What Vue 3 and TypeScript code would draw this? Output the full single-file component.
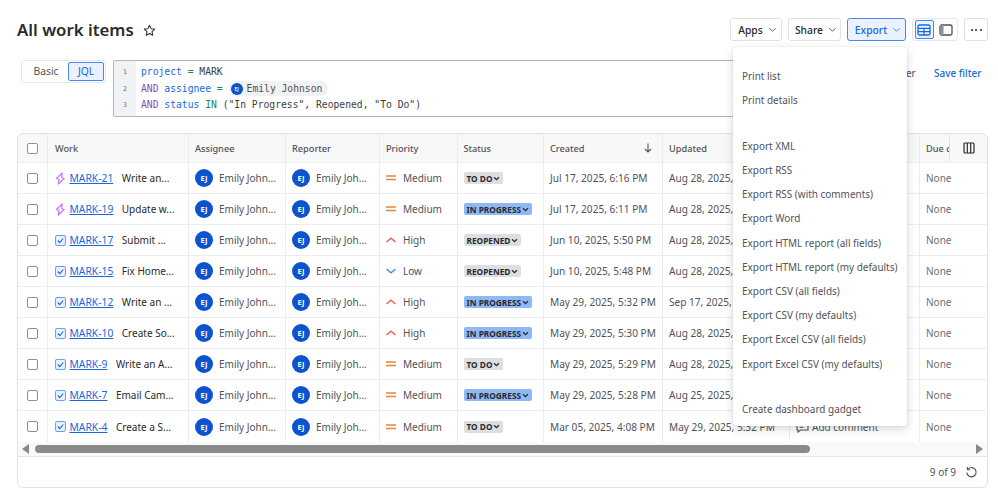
<script setup lang="ts">
type Row = { kind: 'epic' | 'task'; key: string; sum: string; pri: 'Medium' | 'High' | 'Low'; st: 'TO DO' | 'IN PROGRESS' | 'REOPENED'; created: string; updated: string }
const rows: Row[] = [
  { kind: 'epic', key: 'MARK-21', sum: 'Write an...', pri: 'Medium', st: 'TO DO', created: 'Jul 17, 2025, 6:16 PM', updated: 'Aug 28, 2025, 3:12 PM' },
  { kind: 'epic', key: 'MARK-19', sum: 'Update w...', pri: 'Medium', st: 'IN PROGRESS', created: 'Jul 17, 2025, 6:11 PM', updated: 'Aug 28, 2025, 3:12 PM' },
  { kind: 'task', key: 'MARK-17', sum: 'Submit ...', pri: 'High', st: 'REOPENED', created: 'Jun 10, 2025, 5:50 PM', updated: 'Aug 28, 2025, 3:12 PM' },
  { kind: 'task', key: 'MARK-15', sum: 'Fix Home...', pri: 'Low', st: 'REOPENED', created: 'Jun 10, 2025, 5:48 PM', updated: 'Aug 28, 2025, 3:12 PM' },
  { kind: 'task', key: 'MARK-12', sum: 'Write an ...', pri: 'High', st: 'IN PROGRESS', created: 'May 29, 2025, 5:32 PM', updated: 'Sep 17, 2025, 3:12 PM' },
  { kind: 'task', key: 'MARK-10', sum: 'Create So...', pri: 'High', st: 'IN PROGRESS', created: 'May 29, 2025, 5:30 PM', updated: 'Aug 28, 2025, 3:12 PM' },
  { kind: 'task', key: 'MARK-9', sum: 'Write an A...', pri: 'Medium', st: 'TO DO', created: 'May 29, 2025, 5:29 PM', updated: 'Aug 28, 2025, 3:12 PM' },
  { kind: 'task', key: 'MARK-7', sum: 'Email Cam...', pri: 'Medium', st: 'IN PROGRESS', created: 'May 29, 2025, 5:28 PM', updated: 'Aug 25, 2025, 3:12 PM' },
  { kind: 'task', key: 'MARK-4', sum: 'Create a S...', pri: 'Medium', st: 'TO DO', created: 'Mar 05, 2025, 4:08 PM', updated: 'May 29, 2025, 5:32 PM' },
]
const menu = [
  ['Print list', 'Print details'],
  ['Export XML', 'Export RSS', 'Export RSS (with comments)', 'Export Word', 'Export HTML report (all fields)', 'Export HTML report (my defaults)', 'Export CSV (all fields)', 'Export CSV (my defaults)', 'Export Excel CSV (all fields)', 'Export Excel CSV (my defaults)'],
  ['Create dashboard gadget'],
]
</script>

<template>
  <div class="page">
    <header class="top">
      <div class="title-wrap">
        <h1>All work items</h1>
        <svg class="star" viewBox="0 0 14 14" width="13" height="13"><path d="M7 1.400l1.700 3.600 3.900.5-2.900 2.700.8 3.900L7 10.200l-3.500 1.900.8-3.900L1.400 5.500l3.900-.5z" fill="none" stroke="#292a2e" stroke-width="1.100" stroke-linejoin="round"/></svg>
      </div>
      <div class="actions">
        <button class="btn apps">Apps<svg class="chev" viewBox="0 0 10 10"><path d="M1.500 3.500L5 7l3.500-3.500" /></svg></button>
        <button class="btn share">Share<svg class="chev" viewBox="0 0 10 10"><path d="M1.500 3.500L5 7l3.500-3.500" /></svg></button>
        <button class="btn export">Export<svg class="chev" viewBox="0 0 10 10"><path d="M1.500 3.500L5 7l3.500-3.500" /></svg></button>
        <div class="view-group">
          <span class="view on"><svg viewBox="0 0 14 12" width="14" height="12"><rect x="1" y="1" width="12" height="10" rx="1.500" fill="none" stroke="#1868db" stroke-width="1.300"/><path d="M1 4.300h12M1 7.700h12M7 4.300V11" stroke="#1868db" stroke-width="1.200" fill="none"/></svg></span>
          <span class="view"><svg viewBox="0 0 14 12" width="14" height="12"><rect x="1" y="1" width="12" height="10" rx="1.500" fill="none" stroke="#505258" stroke-width="1.300"/><rect x="1" y="1" width="3.500" height="10" fill="#8c8f97"/></svg></span>
        </div>
        <button class="btn more"><i></i><i></i><i></i></button>
      </div>
    </header>

    <section class="filter">
      <div class="toggle">
        <span class="tg">Basic</span>
        <span class="tg active">JQL</span>
      </div>
      <div class="jql">
        <div class="nums"><span>1</span><span>2</span><span>3</span></div>
        <div class="code">
          <div><b class="f">project</b> <b class="o">=</b> MARK</div>
          <div class="l2"><b class="k">AND</b> <b class="f">assignee</b> <b class="o">=</b> <span class="chip"><span class="chip-av">EJ</span>Emily Johnson</span></div>
          <div><b class="k">AND</b> <b class="f">status</b> <b class="o">IN</b> ("In Progress", Reopened, "To Do")</div>
        </div>
      </div>
      <span class="side">Filter</span>
      <a class="save">Save filter</a>
    </section>

    <section class="card">
      <div class="scroller">
        <div class="row head">
          <div class="c c0"><span class="cb"></span></div>
          <div class="c c1">Work</div>
          <div class="c c2">Assignee</div>
          <div class="c c3">Reporter</div>
          <div class="c c4">Priority</div>
          <div class="c c5">Status</div>
          <div class="c c6 created">Created<svg viewBox="0 0 10 12" width="10" height="12"><path d="M5 1.500v8.500M1.800 6.800L5 10l3.200-3.200" fill="none" stroke="#505258" stroke-width="1.100"/></svg></div>
          <div class="c c7">Updated</div>
          <div class="c c8">Comments</div>
          <div class="c c9">Due date</div>
          <div class="picker"><svg viewBox="0 0 12 12" width="12" height="12"><rect x="1" y="1" width="10" height="10" rx="1" fill="none" stroke="#292a2e" stroke-width="1.200"/><path d="M4.300 1v10M7.700 1v10" stroke="#292a2e" stroke-width="1.200"/></svg></div>
        </div>
        <div v-for="r in rows" :key="r.key" class="row body">
          <div class="c c0"><span class="cb"></span></div>
          <div class="c c1">
            <svg v-if="r.kind === 'epic'" class="ti" viewBox="0 0 12 14" width="11" height="13"><path d="M7.800 1L1.800 6.800l2.700 1.300-1 5 6.500-6-2.700-1.200z" fill="none" stroke="#c97cf4" stroke-width="1.400" stroke-linejoin="round"/></svg>
            <svg v-else class="ti" viewBox="0 0 12 12" width="11" height="11"><rect x=".6" y=".6" width="10.800" height="10.800" rx="1.800" fill="#e9f2fe" stroke="#669df1" stroke-width="1.100"/><path d="M3 6l2.200 2.300L9 3.800" fill="none" stroke="#1868db" stroke-width="1.200"/></svg>
            <a class="key">{{ r.key }}</a>
            <span class="sum">{{ r.sum }}</span>
          </div>
          <div class="c c2 person"><span class="av">EJ</span><span class="nm">Emily John...</span></div>
          <div class="c c3 person"><span class="av">EJ</span><span class="nm">Emily Joh...</span></div>
          <div class="c c4 pri">
            <svg v-if="r.pri === 'Medium'" viewBox="0 0 10 8" width="10" height="8"><path d="M0 2h10M0 5.500h10" stroke="#e2853c" stroke-width="1.500"/></svg>
            <svg v-else-if="r.pri === 'High'" viewBox="0 0 10 8" width="10" height="8"><path d="M.5 6L5 2.200 9.500 6" fill="none" stroke="#f15b50" stroke-width="1.400"/></svg>
            <svg v-else viewBox="0 0 10 8" width="10" height="8"><path d="M.5 2L5 5.800 9.500 2" fill="none" stroke="#4688ec" stroke-width="1.400"/></svg>
            {{ r.pri }}
          </div>
          <div class="c c5"><span class="loz" :class="{ prog: r.st === 'IN PROGRESS' }">{{ r.st }}<svg viewBox="0 0 8 8" width="7" height="7"><path d="M1.200 2.500L4 5.300l2.800-2.800" fill="none" stroke="#292a2e" stroke-width="1.500"/></svg></span></div>
          <div class="c c6 date">{{ r.created }}</div>
          <div class="c c7 date">{{ r.updated }}</div>
          <div class="c c8 comment"><svg viewBox="0 0 13 12" width="13" height="12"><path d="M1 1.500h11v7.500H4.500L2 11V9H1z" fill="none" stroke="#505258" stroke-width="1.100"/><path d="M3.500 4h6M3.500 6.300h4" stroke="#505258" stroke-width="1"/></svg>Add comment</div>
          <div class="c c9 none">None</div>
        </div>
      </div>
      <div class="hbar">
        <svg viewBox="0 0 8 10" width="8" height="10"><path d="M7 0v10L0 5z" fill="#8a8a8a"/></svg>
        <div class="track"><div class="thumb"></div></div>
        <svg viewBox="0 0 8 10" width="8" height="10"><path d="M1 0v10l7-5z" fill="#8a8a8a"/></svg>
      </div>
      <footer class="foot">
        <span>9 of 9</span>
        <svg viewBox="0 0 14 14" width="13" height="13"><path d="M3.300 3.300A5 5 0 1 1 2 7" fill="none" stroke="#505258" stroke-width="1.200"/><path d="M2.600 1v3h3" fill="none" stroke="#505258" stroke-width="1.200"/></svg>
      </footer>
    </section>

    <nav class="menu">
      <div v-for="(g, i) in menu" :key="i" class="group">
        <div v-for="m in g" :key="m" class="item">{{ m }}</div>
      </div>
    </nav>
  </div>
</template>

<style>
html, body { margin: 0; background: #fff; overflow: hidden; }
</style>

<style scoped>
.page {
  position: relative;
  width: 998px;
  height: 496px;
  box-sizing: border-box;
  padding: 18px 10px 0 17px;
  font-family: "Noto Sans", "Open Sans", sans-serif;
  font-size: 10px;
  color: #292a2e;
  overflow: hidden;
}
.top { display: flex; justify-content: space-between; align-items: center; height: 23px; }
.title-wrap { display: flex; align-items: center; gap: 9px; }
h1 { margin: 0; font-size: 16.800px; font-weight: 600; line-height: 23px; color: #292a2e; }
.star { display: block; margin-top: 1px; }
.actions { display: flex; align-items: center; gap: 6px; }
.btn {
  display: flex; align-items: center; justify-content: center; gap: 5px;
  box-sizing: border-box; height: 23px; padding: 0 0 0 3px;
  border: 1px solid #dfe1e4; border-radius: 3px; background: #fff;
  font: 500 10.300px "Noto Sans", sans-serif; color: #292a2e;
}
.apps { width: 52px; }
.share { width: 53px; }
.export { width: 59px; background: #e9f2fe; border-color: #4688ec; color: #1868db; }
.chev { width: 9px; height: 9px; fill: none; stroke: currentColor; stroke-width: 1; opacity: .85; }
.view-group { display: flex; gap: 3px; align-items: center; box-sizing: border-box; height: 23px; width: 46px; padding: 0 2px; border: 1px solid #e6e7e9; border-radius: 3px; }
.view { display: flex; align-items: center; justify-content: center; width: 19px; height: 19px; box-sizing: border-box; border-radius: 2px; }
.view.on { background: #e9f2fe; border: 1px solid #4688ec; }
.btn.more { width: 24px; gap: 2.500px; padding: 0; }
.more i { width: 2px; height: 2px; border-radius: 50%; background: #292a2e; }

.filter { display: flex; align-items: flex-start; margin-top: 19px; padding-left: 4px; }
.toggle { display: flex; align-items: center; box-sizing: border-box; width: 85px; height: 23px; padding: 1px 1px 1px 2px; border: 1px solid #e6e7e9; border-radius: 3px; margin-right: 7px; }
.tg { flex: 1; text-align: center; color: #505258; font-size: 10.300px; line-height: 19px; }
.tg.active { flex: 0 0 36px; box-sizing: border-box; border: 1px solid #4688ec; border-radius: 2px; background: #e9f2fe; color: #1868db; line-height: 17px; height: 19px; }
.jql { display: flex; box-sizing: border-box; width: 760px; height: 57px; border: 1.500px solid #b3b5b8; border-radius: 2px; font: 9.700px/16.500px "DejaVu Sans Mono", "Liberation Mono", monospace; color: #3b3d42; }
.nums { display: flex; flex-direction: column; width: 22px; padding-top: 3px; background: #f1f2f3; text-align: center; color: #6b6e76; font-size: 6.500px; }
.nums span { height: 16.500px; }
.code { padding: 3px 0 0 5px; white-space: pre; }
.code b { font-weight: 400; }
.f { color: #1868db; }
.o { color: #1f845a; }
.k { color: #8f49c6; }
.l2 { display: flex; align-items: center; height: 16.500px; gap: 5.850px; }
.chip { display: inline-flex; align-items: center; gap: 4px; height: 15px; padding: 0 6px 0 2px; margin-left: 0; border-radius: 8px; background: #f0f1f2; color: #505258; }
.chip-av { display: flex; align-items: center; justify-content: center; width: 12px; height: 12px; border-radius: 50%; background: #0c53cf; color: #fff; font: 700 4.500px "Noto Sans", sans-serif; }
.side { position: absolute; left: 892px; top: 66px; color: #505258; font-size: 10px; }
.save { position: absolute; left: 934px; top: 66px; color: #1868db; font-weight: 500; font-size: 10px; }

.card { display: flex; flex-direction: column; box-sizing: border-box; height: 355px; margin-top: 16px; border: 1px solid #dfe1e4; border-radius: 6px; overflow: hidden; }
.scroller { position: relative; height: 308px; overflow: hidden; }
.row { display: flex; height: 31px; box-sizing: border-box; border-bottom: 1.500px solid #ebecee; }
.row:last-child { border-bottom: 0; }
.row.head { height: 29px; background: #f8f8f8; font-weight: 500; color: #505258; font-size: 9.200px; }
.c { display: flex; flex: none; align-items: center; box-sizing: border-box; padding-left: 6px; border-right: 1.500px solid #ebecee; white-space: nowrap; overflow: hidden; }
.c0 { width: 30px; padding-left: 9px; }
.c1 { width: 141px; gap: 3.500px; padding-left: 7px; }
.c2 { width: 97px; }
.c3 { width: 94px; }
.c4 { width: 78px; }
.c5 { width: 86px; padding-left: 5.500px; }
.c6 { width: 119px; }
.c7 { width: 127px; }
.c8 { width: 130px; }
.c9 { width: 69px; border-right: 0; }
.created { justify-content: space-between; padding-right: 9px; }
.cb { display: block; width: 11px; height: 11px; box-sizing: border-box; border: 1px solid #8c8f97; border-radius: 2px; background: #fff; }
.ti { flex: none; }
.key { color: #1868db; text-decoration: underline; font-size: 10.300px; }
.sum { margin-left: 5px; color: #292a2e; }
.person { gap: 6px; color: #505258; }
.av { display: flex; flex: none; align-items: center; justify-content: center; width: 18px; height: 18px; border-radius: 50%; background: #0c53cf; color: #fff; font-size: 7.500px; font-weight: 700; }
.pri { gap: 7px; color: #505258; }
.loz { display: inline-flex; align-items: center; gap: 1px; height: 12px; padding: 0 3px; border-radius: 2px; background: #dddee1; color: #292a2e; font-size: 8.300px; font-weight: 700; }
.loz.prog { background: #8fb8f6; }
.date { color: #505258; font-size: 10.100px; }
.comment { gap: 3px; color: #505258; }
.none { color: #6b6e76; }
.picker { position: absolute; right: 0; top: 0; display: flex; align-items: center; justify-content: center; width: 37px; height: 27.500px; background: #f8f8f8; border-left: 1px solid #e3e4e6; }
.hbar { display: flex; align-items: center; justify-content: space-between; height: 15px; padding: 0 4px; box-sizing: border-box; background: #f9f9f9; border-bottom: 1px solid #e3e4e6; }
.track { flex: 1; padding: 0 165px 0 5px; }
.thumb { height: 8px; border-radius: 4px; background: #8a8a8a; }
.foot { display: flex; align-items: center; justify-content: flex-end; gap: 9px; flex: 1; padding-right: 9px; color: #505258; }

.menu { position: absolute; left: 733px; top: 47px; width: 174px; height: 379px; box-sizing: border-box; padding: 17px 0 0 9px; background: #fff; border-radius: 4px; box-shadow: 0 3px 10px rgba(30, 31, 33, .18), 0 0 1px rgba(30, 31, 33, .25); color: #505258; font-size: 9.950px; }
.group { margin-bottom: 21.500px; }
.item { height: 24.200px; line-height: 24.200px; white-space: nowrap; }
</style>
